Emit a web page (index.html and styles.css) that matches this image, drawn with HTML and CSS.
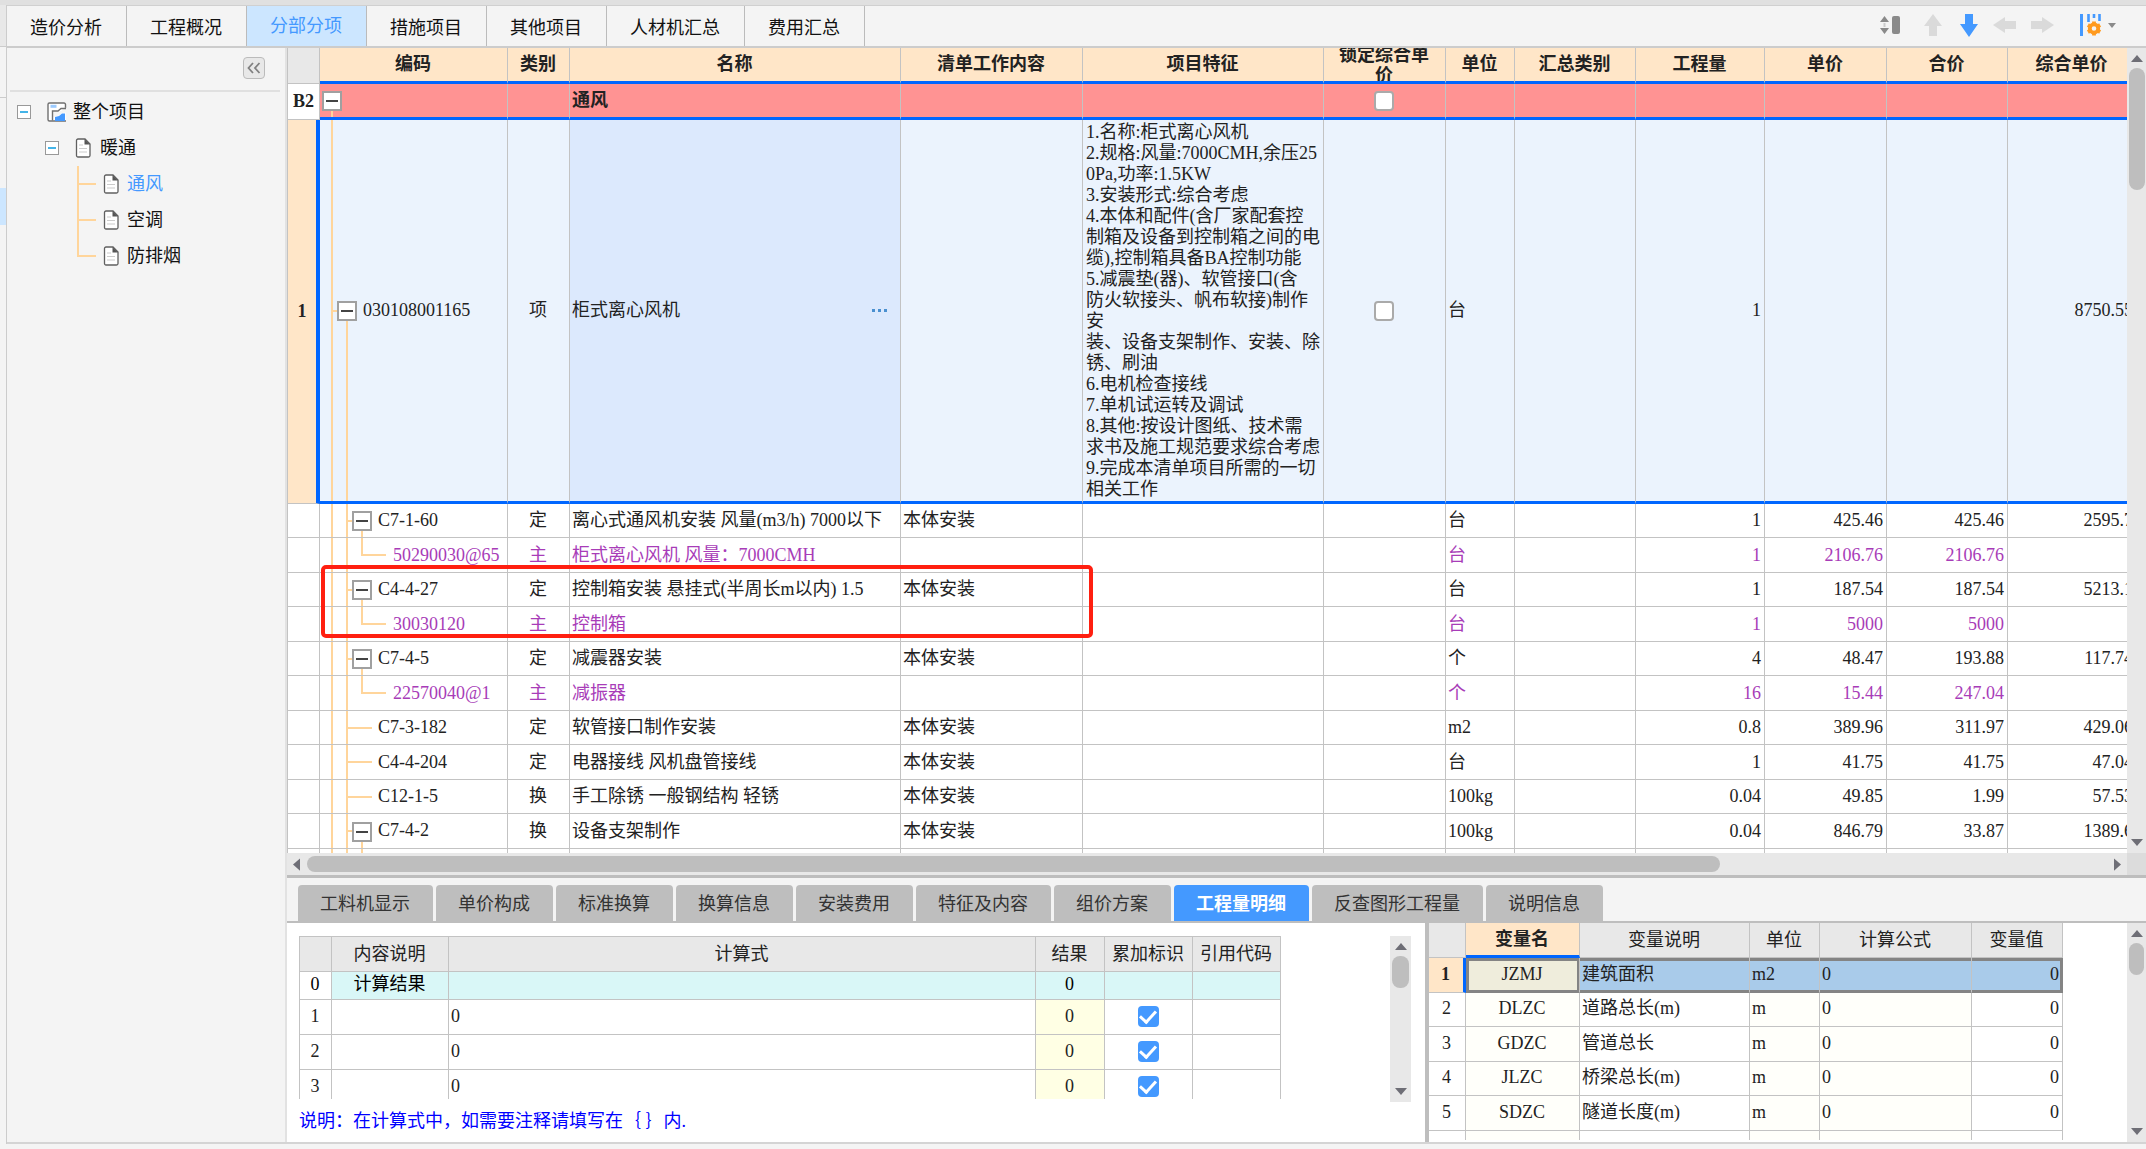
FILE: index.html
```html
<!DOCTYPE html>
<html lang="zh-CN">
<head>
<meta charset="utf-8">
<title>分部分项</title>
<link rel="stylesheet" href="styles.css">
</head>
<body>
<svg class="defs" width="0" height="0" aria-hidden="true">
  <symbol id="doc" viewBox="0 0 16 20"><path d="M3 1h7l5 5v11.500a1.500 1.500 0 0 1-1.500 1.500h-10.500a1.500 1.500 0 0 1-1.500-1.500v-15a1.500 1.500 0 0 1 1.500-1.500z" fill="#fff" stroke="#606060" stroke-width="1.300"/><path d="M9.500 1v5.500h5.500z" fill="#555"/><path d="M4 7h4M4 10.500h8M4 14h8" stroke="#ccc" stroke-width="1.200"/></symbol>
  <symbol id="up" viewBox="0 0 14 8"><path d="M0 8L7 0l7 8z" fill="#6e6e76"/></symbol>
  <symbol id="down" viewBox="0 0 14 8"><path d="M0 0L7 8l7-8z" fill="#6e6e76"/></symbol>
  <symbol id="left" viewBox="0 0 8 14"><path d="M8 0L0 7l8 7z" fill="#6e6e76"/></symbol>
  <symbol id="right" viewBox="0 0 8 14"><path d="M0 0l8 7-8 7z" fill="#6e6e76"/></symbol>
</svg>
<div class="app">
  <div class="rail"><div class="rail-top"></div><div class="rail-gap"></div><div class="rail-mid"></div><div class="rail-on"></div></div>
  <div class="frame">
    <header class="topbar">
      <nav class="tabs">
        <button>造价分析</button><button>工程概况</button><button class="on">分部分项</button><button>措施项目</button><button>其他项目</button><button>人材机汇总</button><button>费用汇总</button>
      </nav>
      <div class="tools">
        <button aria-label="行高"><svg width="21" height="24" viewBox="0 0 21 24"><path d="M0 9l4.500-6L9 9zM0 15l4.500 6L9 15z" fill="#8a8a8a"/><path d="M4.500 10v4" stroke="#ccc" stroke-width="2"/><rect x="12" y="3" width="8" height="18" rx="2" fill="#8a8a8a"/></svg></button>
        <button class="up-btn" aria-label="上移"><svg width="18" height="24" viewBox="0 0 18 24"><path d="M9 1l9 12h-5v10H5V13H0z" fill="#dadada"/></svg></button>
        <button class="down-btn" aria-label="下移"><svg width="18" height="24" viewBox="0 0 18 24"><path d="M9 24L0 11h5V1h8v10h5z" fill="#4499ff"/></svg></button>
        <button aria-label="左移"><svg width="23" height="24" viewBox="0 0 23 24"><path d="M0 12l12-8v4h11v8H12v4z" fill="#dadada"/></svg></button>
        <button aria-label="右移"><svg width="23" height="24" viewBox="0 0 23 24"><path d="M23 12L11 4v4H0v8h11v4z" fill="#dadada"/></svg></button>
        <button class="cols-btn" aria-label="列设置"><svg width="36" height="24" viewBox="0 0 36 24"><path d="M1.500 1v22" stroke="#4499ff" stroke-width="3"/><path d="M8.500 1v8M14 1v4M19.500 1v7" stroke="#4499ff" stroke-width="2.600"/><circle cx="14" cy="15.500" r="4.200" fill="none" stroke="#ff9a1f" stroke-width="3.800"/><path d="M14 8.500v2.500M14 20v2.500M7.900 12l2.200 1.300M17.900 17.700l2.200 1.300M7.900 19l2.200-1.300M17.900 13.300l2.200-1.300" stroke="#ff9a1f" stroke-width="3.800"/><path d="M28 10h8l-4 5z" fill="#8a8a8a"/></svg></button>
      </div>
    </header>
    <div class="work">
      <aside class="side">
        <div class="side-head"><button class="fold" aria-label="收起"><svg width="14" height="12" viewBox="0 0 14 12"><path d="M6 1L1.500 6 6 11M12.500 1L8 6l4.500 5" fill="none" stroke="#808080" stroke-width="1.800"/></svg></button></div>
        <ul class="tree">
          <li><button class="pm" aria-label="折叠"></button><svg class="chart" width="20" height="20" viewBox="0 0 20 20"><path d="M18.500 6V2.500A1.500 1.500 0 0 0 17 1H2.500A1.500 1.500 0 0 0 1 2.500v15A1.500 1.500 0 0 0 2.500 19H19" fill="#fff" stroke="#707070" stroke-width="1.400"/><path d="M5 18.500V10l9-1 5-3.500v5l-4 .5-3 2.500-6 1.500z" fill="#f4f4f4"/><path d="M5.500 18.500V9H11l3-2.500h5" fill="none" stroke="#707070" stroke-width="1.400"/><path d="M3.500 2.800h6v3h-6z" fill="#9ccbff"/><path d="M8 19v-4l4-1 3-2.500h3V19z" fill="#4499ff"/></svg><span>整个项目</span></li>
          <li class="l2"><button class="pm" aria-label="折叠"></button><svg width="16" height="20"><use href="#doc"/></svg><span>暖通</span></li>
          <li class="l3 on"><svg width="16" height="20"><use href="#doc"/></svg><span>通风</span></li>
          <li class="l3"><svg width="16" height="20"><use href="#doc"/></svg><span>空调</span></li>
          <li class="l3 end"><svg width="16" height="20"><use href="#doc"/></svg><span>防排烟</span></li>
        </ul>
      </aside>
      <main class="main">
        <section class="sheet">
          <div class="view">
            <table class="grid">
              <colgroup><col class="c-no"><col class="c-code"><col class="c-kind"><col class="c-name"><col class="c-work"><col class="c-feat"><col class="c-lock"><col class="c-unit"><col class="c-sum"><col class="c-qty"><col class="c-price"><col class="c-total"><col class="c-all"></colgroup>
              <thead><tr><th class="no"></th><th>编码</th><th>类别</th><th>名称</th><th>清单工作内容</th><th>项目特征</th><th><div class="clip">锁定综合单价</div></th><th>单位</th><th>汇总类别</th><th>工程量</th><th>单价</th><th>合价</th><th>综合单价</th></tr></thead>
              <tbody>
                <tr class="part"><td class="no">B2</td><td class="code root"><button class="box" aria-label="折叠"></button></td><td></td><td>通风</td><td></td><td></td><td class="mid"><input type="checkbox" aria-label="锁定综合单价"></td><td></td><td></td><td></td><td></td><td></td><td></td></tr>
                <tr class="item"><td class="no">1</td><td class="code top"><button class="box" aria-label="折叠"></button>030108001165</td><td class="mid">项</td><td class="cur"><div class="edit">柜式离心风机<button class="more" aria-label="更多"><i></i><i></i><i></i></button></div></td><td></td><td class="feat">1.名称:柜式离心风机<br>2.规格:风量:7000CMH,余压25<br>0Pa,功率:1.5KW<br>3.安装形式:综合考虑<br>4.本体和配件(含厂家配套控<br>制箱及设备到控制箱之间的电<br>缆),控制箱具备BA控制功能<br>5.减震垫(器)、软管接口(含<br>防火软接头、帆布软接)制作<br>安<br>装、设备支架制作、安装、除<br>锈、刷油<br>6.电机检查接线<br>7.单机试运转及调试<br>8.其他:按设计图纸、技术需<br>求书及施工规范要求综合考虑<br>9.完成本清单项目所需的一切<br>相关工作</td><td class="mid"><input type="checkbox" aria-label="锁定综合单价"></td><td>台</td><td></td><td class="num">1</td><td></td><td></td><td class="num">8750.55</td></tr>
                <tr><td class="no"></td><td class="code sub"><button class="box" aria-label="折叠"></button>C7-1-60</td><td class="mid">定</td><td>离心式通风机安装 风量(m3/h) 7000以下</td><td>本体安装</td><td></td><td></td><td>台</td><td></td><td class="num">1</td><td class="num">425.46</td><td class="num">425.46</td><td class="num">2595.7</td></tr>
                <tr class="mat"><td class="no"></td><td class="code leaf">50290030@65</td><td class="mid">主</td><td>柜式离心风机 风量：7000CMH</td><td></td><td></td><td></td><td>台</td><td></td><td class="num">1</td><td class="num">2106.76</td><td class="num">2106.76</td><td></td></tr>
                <tr><td class="no"></td><td class="code sub"><button class="box" aria-label="折叠"></button>C4-4-27</td><td class="mid">定</td><td>控制箱安装 悬挂式(半周长m以内) 1.5</td><td>本体安装</td><td></td><td></td><td>台</td><td></td><td class="num">1</td><td class="num">187.54</td><td class="num">187.54</td><td class="num">5213.1</td></tr>
                <tr class="mat"><td class="no"></td><td class="code leaf">30030120</td><td class="mid">主</td><td>控制箱</td><td></td><td></td><td></td><td>台</td><td></td><td class="num">1</td><td class="num">5000</td><td class="num">5000</td><td></td></tr>
                <tr><td class="no"></td><td class="code sub"><button class="box" aria-label="折叠"></button>C7-4-5</td><td class="mid">定</td><td>减震器安装</td><td>本体安装</td><td></td><td></td><td>个</td><td></td><td class="num">4</td><td class="num">48.47</td><td class="num">193.88</td><td class="num">117.74</td></tr>
                <tr class="mat"><td class="no"></td><td class="code leaf">22570040@1</td><td class="mid">主</td><td>减振器</td><td></td><td></td><td></td><td>个</td><td></td><td class="num">16</td><td class="num">15.44</td><td class="num">247.04</td><td></td></tr>
                <tr><td class="no"></td><td class="code plain">C7-3-182</td><td class="mid">定</td><td>软管接口制作安装</td><td>本体安装</td><td></td><td></td><td>m2</td><td></td><td class="num">0.8</td><td class="num">389.96</td><td class="num">311.97</td><td class="num">429.06</td></tr>
                <tr><td class="no"></td><td class="code plain">C4-4-204</td><td class="mid">定</td><td>电器接线 风机盘管接线</td><td>本体安装</td><td></td><td></td><td>台</td><td></td><td class="num">1</td><td class="num">41.75</td><td class="num">41.75</td><td class="num">47.04</td></tr>
                <tr><td class="no"></td><td class="code plain">C12-1-5</td><td class="mid">换</td><td>手工除锈 一般钢结构 轻锈</td><td>本体安装</td><td></td><td></td><td>100kg</td><td></td><td class="num">0.04</td><td class="num">49.85</td><td class="num">1.99</td><td class="num">57.53</td></tr>
                <tr><td class="no"></td><td class="code sub"><button class="box" aria-label="折叠"></button>C7-4-2</td><td class="mid">换</td><td>设备支架制作</td><td>本体安装</td><td></td><td></td><td>100kg</td><td></td><td class="num">0.04</td><td class="num">846.79</td><td class="num">33.87</td><td class="num">1389.6</td></tr>
                <tr><td class="no"></td><td class="code leaf"></td><td></td><td></td><td></td><td></td><td></td><td></td><td></td><td></td><td></td><td></td><td></td></tr>
              </tbody>
            </table>
            <div class="mark"></div>
          </div>
          <div class="vbar sheet-v"><svg width="12" height="7"><use href="#up"/></svg><div class="track"><div class="thumb"></div></div><svg width="12" height="7"><use href="#down"/></svg></div>
          <div class="hbar"><svg width="7" height="13"><use href="#left"/></svg><div class="track"><div class="thumb"></div></div><svg width="7" height="13"><use href="#right"/></svg></div>
          <div class="corner"></div>
        </section>
        <nav class="subtabs">
          <button>工料机显示</button><button>单价构成</button><button>标准换算</button><button>换算信息</button><button>安装费用</button><button>特征及内容</button><button>组价方案</button><button class="on">工程量明细</button><button>反查图形工程量</button><button>说明信息</button>
        </nav>
        <section class="panes">
          <div class="calc">
            <div class="calc-row">
              <div class="calc-view">
                <table class="small">
                  <colgroup><col class="s-no"><col class="s-desc"><col><col class="s-res"><col class="s-flag"><col class="s-flag"></colgroup>
                  <thead><tr><th></th><th>内容说明</th><th>计算式</th><th>结果</th><th>累加标识</th><th>引用代码</th></tr></thead>
                  <tbody>
                    <tr class="sum"><td class="mid">0</td><td class="mid">计算结果</td><td></td><td class="mid">0</td><td></td><td></td></tr>
                    <tr><td class="mid">1</td><td></td><td>0</td><td class="mid res">0</td><td class="mid"><input type="checkbox" checked aria-label="累加标识"></td><td></td></tr>
                    <tr><td class="mid">2</td><td></td><td>0</td><td class="mid res">0</td><td class="mid"><input type="checkbox" checked aria-label="累加标识"></td><td></td></tr>
                    <tr><td class="mid">3</td><td></td><td>0</td><td class="mid res">0</td><td class="mid"><input type="checkbox" checked aria-label="累加标识"></td><td></td></tr>
                  </tbody>
                </table>
              </div>
              <div class="vbar calc-v"><svg width="12" height="7"><use href="#up"/></svg><div class="track"><div class="thumb"></div></div><svg width="12" height="7"><use href="#down"/></svg></div>
            </div>
            <p class="note">说明：在计算式中，如需要注释请填写在｛ ｝内.</p>
          </div>
          <div class="vars">
            <div class="vars-view">
              <table class="small">
                <colgroup><col class="v-no"><col class="v-name"><col class="v-desc"><col class="v-unit"><col class="v-form"><col class="v-val"></colgroup>
                <thead><tr><th></th><th class="on">变量名</th><th>变量说明</th><th>单位</th><th>计算公式</th><th>变量值</th></tr></thead>
                <tbody>
                  <tr class="sel"><td class="mid">1</td><td class="mid">JZMJ</td><td>建筑面积</td><td>m2</td><td>0</td><td class="num">0</td></tr>
                  <tr><td class="mid">2</td><td class="mid">DLZC</td><td>道路总长(m)</td><td>m</td><td>0</td><td class="num">0</td></tr>
                  <tr><td class="mid">3</td><td class="mid">GDZC</td><td>管道总长</td><td>m</td><td>0</td><td class="num">0</td></tr>
                  <tr><td class="mid">4</td><td class="mid">JLZC</td><td>桥梁总长(m)</td><td>m</td><td>0</td><td class="num">0</td></tr>
                  <tr><td class="mid">5</td><td class="mid">SDZC</td><td>隧道长度(m)</td><td>m</td><td>0</td><td class="num">0</td></tr>
                  <tr><td></td><td></td><td></td><td></td><td></td><td></td></tr>
                </tbody>
              </table>
            </div>
            <div class="vbar vars-v"><svg width="12" height="7"><use href="#up"/></svg><div class="track"><div class="thumb"></div></div><svg width="12" height="7"><use href="#down"/></svg></div>
          </div>
        </section>
      </main>
    </div>
  </div>
</div>
</body>
</html>
```
FILE: styles.css
```css
:root {
  --line: #c3c3c3;
  --blue: #0066ff;
  --guide: #ffd59b;
  --peach: #ffe6c8;
}
* { box-sizing: border-box; }
body {
  margin: 0;
  background: #f4f4f4;
  color: #222;
  font-family: "Liberation Serif", "Noto Sans CJK SC", serif;
  font-size: 18px;
  line-height: 21px;
}
button { font: inherit; color: inherit; margin: 0; padding: 0; border: 0; background: none; }
svg { display: block; flex: none; }
.defs { position: absolute; }
.app {
  display: flex;
  height: 100vh;
  padding-bottom: 5px;
  border-top: 5px solid #e0e0e0;
  overflow: hidden;
}

/* left rail */
.rail { width: 7px; flex: none; display: flex; flex-direction: column; border-right: 1px solid #ccc; }
.rail-top { height: 42px; background: #e8e8e8; border-bottom: 1px solid #ccc; }
.rail-gap { height: 51px; border-bottom: 1px solid #ccc; }
.rail-mid { height: 90px; }
.rail-on { height: 37px; background: #cce6ff; }

/* top bar */
.frame { flex: 1; min-width: 0; display: flex; flex-direction: column; border-bottom: 2px solid #d4d4d4; }
.topbar { display: flex; justify-content: space-between; height: 43px; flex: none; border-top: 1px solid #d0d0d0; border-bottom: 2px solid #ccc; }
.tabs { display: flex; color: #111; }
.tabs button { padding: 4px 24px 0 23px; border-right: 1px solid #bbb; }
.tabs .on { background: #cce6ff; color: #4499ff; padding-top: 1px; }
.tools { display: flex; align-items: center; gap: 15px; padding: 0 30px 3px 0; }
.tools .up-btn { margin-left: 8px; }
.tools .down-btn { margin-left: 3px; }
.tools .cols-btn { margin-left: 11px; }

.work { flex: 1; min-height: 0; display: flex; }

/* project tree */
.side { width: 280px; flex: none; border-right: 2px solid #e2e2e2; }
.side-head { height: 44px; margin: 0 5px 0 3px; padding: 9px 15px 0 0; display: flex; justify-content: flex-end; border-bottom: 2px solid #e0e0e0; }
.fold { width: 22px; height: 22px; display: grid; place-items: center; background: #e8e8e8; border: 1px solid #bbb; border-radius: 4px; }
.tree { list-style: none; margin: 2px 0 0; padding: 0 0 0 10px; color: #111; }
.tree li { height: 36px; display: flex; align-items: center; gap: 10px; }
.tree .chart { margin: 0 -4px 0 6px; }
.tree .l2 { padding-left: 28px; gap: 9px; }
.tree .l2 svg { margin-left: 7px; }
.tree .l3 { margin-left: 60px; padding-left: 26px; gap: 8px; background: linear-gradient(var(--guide), var(--guide)) 0 0 / 2px 100% no-repeat, linear-gradient(var(--guide), var(--guide)) 0 17px / 19px 2px no-repeat; }
.tree .end { background-size: 2px 18px, 19px 2px; }
.tree .on { color: #4499ff; }
.pm { width: 14px; height: 14px; border: 1px solid #999; background: linear-gradient(#44b4e8, #44b4e8) center / 8px 2px no-repeat #fff; }

/* main sheet */
.main { flex: 1; min-width: 0; display: flex; flex-direction: column; }
.sheet { flex: 1; min-height: 0; display: grid; grid-template: minmax(0, 1fr) 22px / minmax(0, 1fr) 19px; border-bottom: 3px solid #bdbdbd; }
.view { position: relative; overflow: hidden; background: #fff; }
table { border-collapse: separate; border-spacing: 0; table-layout: fixed; }
td, th { padding: 0 3px 2px 2px; border: 0 solid var(--line); border-width: 0 1px 1px 0; white-space: nowrap; overflow: hidden; text-align: left; font-weight: 400; }
.mid, th { text-align: center; }
.num { text-align: right; }
.grid { width: 1850px; }
.grid td, .grid th { padding-bottom: 0; }
.grid th { height: 36px; background: var(--peach); border-bottom: 3px solid var(--blue); font-weight: 700; }
.clip { height: 33px; margin: 0 12px; display: flex; align-items: center; line-height: 20px; white-space: normal; overflow: hidden; }
.grid .no { padding: 0; border-left: 1px solid var(--line); border-bottom: 1px solid var(--line); text-align: center; font-weight: 700; }
.grid th.no { background: #e8e8e8; }
.grid tbody tr { height: 34px; }
.grid tbody tr:nth-child(even) { height: 35px; }
.grid tbody tr.part { height: 36px; background: #ff9393; }
.grid tbody tr.item:nth-child(even) { height: 384px; background: #ebf3fd; }
.part td { font-weight: 700; }
.part .no { background: #fff; }
.part td, .item td { border-bottom: 3px solid var(--blue); }
.grid .item .no { background: var(--peach); border-right: 4px solid var(--blue); }
.item .cur { background: #dce9fd; }
.item .feat { padding: 0 0 0 3px; }
.mat { color: #a83cb8; }
.edit { display: flex; justify-content: space-between; padding-right: 10px; }
.more { display: flex; gap: 3px; align-items: center; }
.more i { width: 3px; height: 3px; background: #4a90d0; }
.c-no { width: 33px; } .c-code { width: 188px; } .c-kind { width: 62px; } .c-name { width: 331px; }
.c-work { width: 182px; } .c-feat { width: 241px; } .c-lock { width: 122px; } .c-unit { width: 69px; }
.c-sum { width: 121px; } .c-qty { width: 129px; } .c-price { width: 122px; } .c-total { width: 121px; } .c-all { width: 129px; }

/* outline guides of the code column */
.code { --g: linear-gradient(var(--guide), var(--guide)); }
.box { width: 20px; height: 20px; margin-right: 6px; vertical-align: middle; border: 2px solid #a0a0a0; background: linear-gradient(#444, #444) center / 12px 2px no-repeat #fff; }
.code.root { background: var(--g) 11px 100% / 2px 10px no-repeat; }
.code.top { padding-left: 17px; background: var(--g) 11px 0 / 2px 100% no-repeat, var(--g) 11px 50% / 8px 2px no-repeat, var(--g) 26px 100% / 2px 50% no-repeat; }
.code.sub { padding-left: 32px; background: var(--g) 11px 0 / 2px 100% no-repeat, var(--g) 26px 0 / 2px 100% no-repeat, var(--g) 26px 50% / 8px 2px no-repeat, var(--g) 41px 100% / 2px 50% no-repeat; }
.code.plain { padding-left: 58px; background: var(--g) 11px 0 / 2px 100% no-repeat, var(--g) 26px 0 / 2px 100% no-repeat, var(--g) 26px 50% / 26px 2px no-repeat; }
.code.leaf { padding-left: 73px; background: var(--g) 11px 0 / 2px 100% no-repeat, var(--g) 26px 0 / 2px 100% no-repeat, var(--g) 41px 0 / 2px 50% no-repeat, var(--g) 41px 50% / 25px 2px no-repeat; }

input[type="checkbox"] { appearance: none; width: 20px; height: 20px; margin: 0; vertical-align: middle; border: 2px solid #aaa; border-radius: 4px; background: #fff; }
input[type="checkbox"]:checked { width: 21px; height: 21px; border: 0; display: inline-grid; place-items: center; background: #4499ff; }
input[type="checkbox"]:checked::before { content: ""; width: 13px; height: 7px; border: solid #fff; border-width: 0 0 3px 3px; rotate: -48deg; translate: 0 -2px; }

/* highlight frame over the control-box rows */
.mark { position: absolute; left: 34px; top: 517px; width: 772px; height: 73px; border: 4px solid #ff1f10; border-radius: 5px; pointer-events: none; }

/* scroll bars */
.vbar, .hbar { display: flex; align-items: center; background: #e8e8e8; }
.vbar { flex-direction: column; padding: 7px 0; gap: 6px; }
.track { flex: 1; align-self: stretch; display: flex; padding: 0 2px; }
.thumb { flex: 1; background: #bebebe; border-radius: 8px; }
.sheet-v .thumb { height: 122px; }
.sheet-v .track { padding-right: 1px; }
.hbar { padding: 0 6px; gap: 7px; }
.hbar .track { padding: 3px 0; }
.hbar .thumb { flex: 0 0 78.5%; }
.corner { background: #dcdcdc; }

/* lower tabs */
.subtabs { flex: none; display: flex; gap: 3px; height: 45px; padding: 7px 0 0 11px; border-bottom: 2px solid #bebebe; color: #333; }
.subtabs button { padding: 2px 23px 0 22px; background: #bebebe; border-radius: 4px 4px 0 0; }
.subtabs .on { background: #4499ff; color: #fff; font-weight: 700; }

/* lower panes */
.panes { flex: none; display: flex; height: 219px; background: #fff; }
.small { width: 100%; }
.small th { height: 35px; padding-bottom: 0; background: #e8e8e8; }
.calc { flex: 1; min-width: 0; padding: 13px 14px 0 12px; }
.calc-row { display: flex; align-items: flex-start; gap: 109px; }
.calc-view { flex: 1; height: 163px; overflow: hidden; border-top: 1px solid var(--line); border-left: 1px solid var(--line); }
.calc td { height: 35px; }
.calc .sum td { height: 28px; color: #000; }
.calc .sum { background: #d9f7f7; }
.calc .sum td:first-child { background: #fff; }
.calc .res { background: #ffffe4; }
.calc-v { width: 21px; height: 166px; }
.calc-v .thumb, .vars-v .thumb { height: 32px; }
.s-no { width: 32px; } .s-desc { width: 117px; } .s-res { width: 69px; } .s-flag { width: 88px; }
.note { margin: 9px 0 0; color: #00f; }
.vars { width: 721px; flex: none; display: flex; justify-content: space-between; border-left: 4px solid #bebebe; }
.vars-view { width: 634px; height: 217px; overflow: hidden; }
.vars td { height: 34px; }
.vars tr:nth-child(odd) td { height: 35px; }
.vars td:nth-child(2), .vars td:nth-child(4), .vars td:nth-child(5) { background: #fffffa; }
.vars th.on { background: var(--peach); border-bottom: 3px solid var(--blue); font-weight: 700; }
.vars .sel td { background: #a9cbea; box-shadow: inset 0 3px #848484, inset 0 -2px #848484; border-bottom-color: #848484; }
.vars .sel td:nth-child(1) { background: var(--peach); box-shadow: none; border-right: 3px solid var(--blue); border-bottom-color: var(--line); font-weight: 700; }
.vars .sel td:nth-child(2) { background: #efeddc; box-shadow: inset 3px 3px #848484, inset -2px -2px #848484; }
.vars .sel td:last-child { box-shadow: inset 0 3px #848484, inset -2px -2px #848484; border-right-color: #848484; }
.vars-v { width: 19px; }
.v-no { width: 37px; } .v-name { width: 114px; } .v-desc { width: 170px; } .v-unit { width: 70px; } .v-form { width: 152px; } .v-val { width: 91px; }
```
